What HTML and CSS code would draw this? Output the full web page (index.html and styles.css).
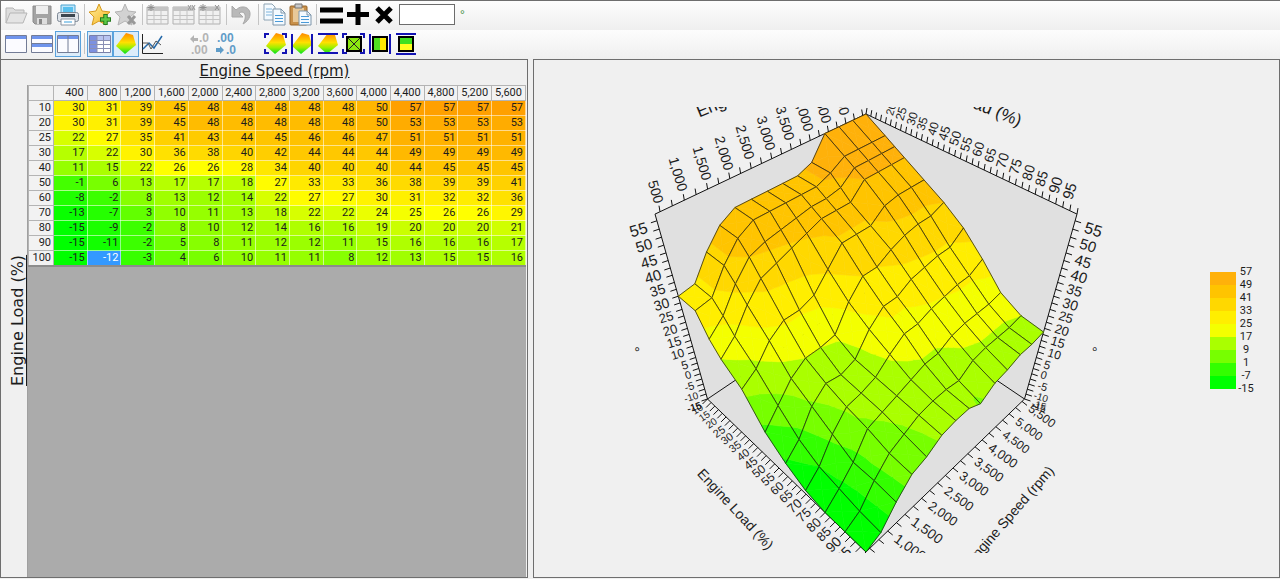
FILE: index.html
```
<!DOCTYPE html>
<html lang="en">
<head>
<meta charset="utf-8">
<title>Map editor</title>
<link rel="stylesheet" href="styles.css">
</head>
<body>
<svg class="defs" aria-hidden="true">
  <defs>
    <linearGradient id="heat" x1="0" y1="0" x2="0" y2="1">
      <stop offset="0" stop-color="#ff8a00"/><stop offset=".45" stop-color="#ffe000"/><stop offset=".7" stop-color="#9cf000"/><stop offset="1" stop-color="#00e020"/>
    </linearGradient>
    <linearGradient id="gold" x1="0" y1="0" x2="1" y2="1">
      <stop offset="0" stop-color="#fff0a0"/><stop offset="1" stop-color="#f5b21c"/>
    </linearGradient>
    <g id="table-grey">
      <path d="M1 4h21v17H1z" fill="#f0f0f0" stroke="#b0b0b0"/>
      <path d="M1 4h21v4H1z" fill="#c4c4c4"/>
      <path d="M1 12.500h21M1 16.500h21M8 8v13M15 8v13" stroke="#c4c4c4" fill="none"/>
    </g>
    <path id="patch" d="M12 1l7 2 3 10-11 9-9-8z" fill="url(#heat)"/>
    <path id="corners" d="M1 6V2h4M18 2h4v4M22 17v4h-4M5 21H1v-4" fill="none" stroke="#1414b4" stroke-width="2"/>
  </defs>
</svg>

<header class="toolbars">
  <div class="toolbar" role="toolbar" aria-label="File and edit">
    <button class="tool" aria-label="Open"><svg viewBox="0 0 24 24"><path d="M2 20V5h7l2 2h9v4" fill="#ddd" stroke="#b5b5b5"/><path d="M2 20l4-10h17l-4 10z" fill="#e4e4e4" stroke="#b5b5b5"/></svg></button>
    <button class="tool" aria-label="Save"><svg viewBox="0 0 24 24"><path d="M3 3h18v18H5l-2-2z" fill="#a3a3a3" stroke="#8c8c8c"/><path d="M6 3h12v8H6z" fill="#eee"/><path d="M7 15h10v6H7z" fill="#ddd"/><path d="M9 16h3v5H9z" fill="#888"/></svg></button>
    <button class="tool" aria-label="Print"><svg viewBox="0 0 24 24"><path d="M5 10V2h14v8" fill="#bfe6fa" stroke="#4aa3d0"/><path d="M7 4h10v6H7z" fill="#58c0ee"/><rect x="1.500" y="9.500" width="21" height="9" rx="2" fill="#dfe4ea" stroke="#7d8894"/><path d="M5 11h14v3H5z" fill="#3b4650"/><path d="M5 16h14v6H5z" fill="#fff" stroke="#8893a0"/><path d="M8 19h8" stroke="#3aa0dc"/></svg></button>
    <span class="sep"></span>
    <button class="tool" aria-label="Add favourite"><svg viewBox="0 0 24 24"><path d="M11 1l3 7 8 1-6 5 2 8-7-4-7 4 2-8-5-5 7-1z" fill="url(#gold)" stroke="#d79a1c"/><path d="M17.500 11v11M12 16.500h11" stroke="#237a1c" stroke-width="4.500"/><path d="M17.500 12v9M13 16.500h9" stroke="#5cc944" stroke-width="2.500"/></svg></button>
    <button class="tool" aria-label="Remove favourite"><svg viewBox="0 0 24 24"><path d="M11 1l3 7 8 1-6 5 2 8-7-4-7 4 2-8-5-5 7-1z" fill="#d2d2d2" stroke="#b4b4b4"/><path d="M14 13l7 8M21 13l-7 8" stroke="#999" stroke-width="3"/></svg></button>
    <span class="sep"></span>
    <button class="tool" aria-label="Insert cell"><svg viewBox="0 0 24 24"><use href="#table-grey"/><path d="M5 1v7M1.500 4.500h7M2.500 2l5 5M7.500 2l-5 5" stroke="#8f8f8f"/></svg></button>
    <button class="tool" aria-label="Insert row"><svg viewBox="0 0 24 24"><use href="#table-grey"/><path d="M16 2l3 5M19 2l-3 5M20 2l3 5M23 2l-3 5" stroke="#999"/></svg></button>
    <button class="tool" aria-label="Insert column"><svg viewBox="0 0 24 24"><use href="#table-grey"/><path d="M5 1v7M1.500 4.500h7M2.500 2l5 5M7.500 2l-5 5M17 2l4 5M21 2l-4 5" stroke="#8f8f8f"/></svg></button>
    <span class="sep"></span>
    <button class="tool" aria-label="Undo"><svg viewBox="0 0 24 24"><path d="M2 3v11h11L9 10c5-3 9 2 4 11 11-6 8-18-1-17-2 0-4 1-6 3z" fill="#b9b9b9" stroke="#a8a8a8"/></svg></button>
    <span class="sep"></span>
    <button class="tool" aria-label="Copy"><svg viewBox="0 0 24 24"><path d="M2 1h8l3 3v13H2z" fill="#f4faff" stroke="#8ea4b4"/><path d="M4 6h6M4 9h6M4 12h6" stroke="#7fb4dc"/><path d="M11 6h8l4 4v12H11z" fill="#f4faff" stroke="#7e96aa"/><path d="M19 6v4h4" fill="none" stroke="#7e96aa"/><path d="M13 12.500h8M13 15.500h8M13 18.500h8" stroke="#4a9ad8"/></svg></button>
    <button class="tool" aria-label="Paste"><svg viewBox="0 0 24 24"><rect x="2" y="3" width="17" height="19" rx="1" fill="#c8904a" stroke="#976428"/><path d="M5 5h11v14H5z" fill="#e8c898"/><path d="M7 1h7v4H7z" fill="#c9c9c9" stroke="#777"/><path d="M11 8h8l4 4v10H11z" fill="#f4faff" stroke="#7e96aa"/><path d="M19 8v4h4" fill="none" stroke="#7e96aa"/><path d="M13 13.500h8M13 16.500h8M13 19.500h8" stroke="#4a9ad8"/></svg></button>
    <span class="sep"></span>
    <button class="tool" aria-label="Set value"><svg viewBox="0 0 24 24"><path d="M0 7h23M0 18h23" stroke="#000" stroke-width="5"/></svg></button>
    <button class="tool" aria-label="Add value"><svg viewBox="0 0 24 24"><path d="M12 1v21M1 11.500h22" stroke="#000" stroke-width="5"/></svg></button>
    <button class="tool" aria-label="Multiply by value"><svg viewBox="0 0 24 24"><path d="M5 5l14 14M19 5L5 19" stroke="#000" stroke-width="5"/></svg></button>
    <input class="value" type="text" aria-label="Value">
    <span class="unit">°</span>
  </div>
  <div class="toolbar" role="toolbar" aria-label="View">
    <button class="tool" aria-label="Single pane"><svg viewBox="0 0 24 24"><path d="M1.500 3.500h21v17h-21z" fill="#fbfbff" stroke="#737c96"/><path d="M2 4h20v3H2z" fill="#6f94ec"/></svg></button>
    <button class="tool" aria-label="Stacked panes"><svg viewBox="0 0 24 24"><path d="M1.500 3.500h21v17h-21z" fill="#fbfbff" stroke="#737c96"/><path d="M2 4h20v3H2zM2 12h20v3H2z" fill="#6f94ec"/><path d="M1 11.500h22" stroke="#737c96"/></svg></button>
    <button class="tool on" aria-label="Side by side panes" aria-pressed="true"><svg viewBox="0 0 24 24"><path d="M1.500 3.500h21v17h-21z" fill="#fbfbff" stroke="#737c96"/><path d="M2 4h20v3H2z" fill="#6f94ec"/><path d="M12 4v16" stroke="#737c96"/></svg></button>
    <span class="sep"></span>
    <button class="tool on" aria-label="Table" aria-pressed="true"><svg viewBox="0 0 24 24"><path d="M1.500 3.500h21v17h-21z" fill="#fff" stroke="#7a80a8"/><path d="M2 4h7v16H2z" fill="#7c90e0"/><path d="M9 4h13v4H9z" fill="#b8c4f0"/><path d="M2 8.500h20M2 12.500h20M2 16.500h20M9 4v16M15.500 4v16" stroke="#8a8fb4"/></svg></button>
    <button class="tool on" aria-label="3D surface" aria-pressed="true"><svg viewBox="0 0 24 24"><use href="#patch"/></svg></button>
    <button class="tool" aria-label="Line graph"><svg viewBox="0 0 24 24"><path d="M2.500 2v19.500H23" fill="none" stroke="#222"/><path d="M3 17l6-6 5 5 8-12" fill="none" stroke="#2468a8" stroke-width="1.500"/><path d="M3 11h5l3 6 5-8 5 4" fill="none" stroke="#555"/></svg></button>
    <span class="gap"></span>
    <button class="tool" aria-label="Fewer decimals"><svg viewBox="0 0 24 24" class="digits grey"><text x="10" y="10">.0</text><text x="2" y="22">.00</text><path d="M1 7l4-4v3h4v3H5v2z"/></svg></button>
    <button class="tool" aria-label="More decimals"><svg viewBox="0 0 24 24" class="digits blue"><text x="2" y="10">.00</text><text x="11" y="22">.0</text><path d="M9 18l-4-4v2H1v4h4v2z"/></svg></button>
    <span class="gap"></span>
    <button class="tool" aria-label="Fit surface"><svg viewBox="0 0 24 24"><use href="#patch"/><use href="#corners"/></svg></button>
    <button class="tool" aria-label="Fit surface width"><svg viewBox="0 0 24 24"><use href="#patch"/><path d="M2 2v20M22 2v20" stroke="#1414b4" stroke-width="2"/></svg></button>
    <button class="tool" aria-label="Fit surface height"><svg viewBox="0 0 24 24"><use href="#patch"/><path d="M2 2h20M2 21h20" stroke="#1414b4" stroke-width="2"/></svg></button>
    <button class="tool" aria-label="Fit view"><svg viewBox="0 0 24 24"><use href="#corners"/><path d="M5 5h14v14H5z" fill="#8be810" stroke="#000" stroke-width="2"/><path d="M6 6l12 12M18 6L6 18" stroke="#222"/></svg></button>
    <button class="tool" aria-label="Fit view width"><svg viewBox="0 0 24 24"><path d="M2 2v20M22 2v20" stroke="#1414b4" stroke-width="2"/><path d="M5 5h14v14H5z" fill="#ffea00"/><path d="M5 5h7v14H5z" fill="#50e020"/><path d="M5 5h14v14H5z" fill="none" stroke="#000" stroke-width="2"/></svg></button>
    <button class="tool" aria-label="Fit view height"><svg viewBox="0 0 24 24"><path d="M2 2h20M2 22h20" stroke="#1414b4" stroke-width="2"/><path d="M5 5h14v14H5z" fill="#ffff20"/><path d="M5 5h14v7H5z" fill="#40e020"/><path d="M5 5h14v14H5z" fill="none" stroke="#000" stroke-width="2"/></svg></button>
  </div>
</header>

<main class="panes">
  <section class="pane table-pane">
    <h1 class="x-title">Engine Speed (rpm)</h1>
    <div class="y-title">Engine Load (%)</div>
    <div class="sheet">
      <table class="map" id="map" aria-label="Engine load by engine speed"></table>
    </div>
  </section>
  <section class="pane chart-pane">
    <svg class="plot" viewBox="556 107 624 446" role="img" aria-label="3D surface of the map">
      <g id="walls"></g>
      <g id="surface"></g>
      <g id="ticks"></g>
      <g id="labels"></g>
    </svg>
    <div class="legend">
      <div class="ramp" id="ramp"></div>
      <ol class="scale" id="scale"></ol>
    </div>
  </section>
</main>
<script src="app.js"></script>
</body>
</html>
```
FILE: styles.css
```
* { box-sizing: border-box; }
html, body { height: 100%; }
body {
  margin: 0;
  display: flex;
  flex-direction: column;
  background: #f0f0f0;
  color: #1c1c1c;
  font-family: "Liberation Sans", Arial, sans-serif;
}
.defs { position: absolute; width: 0; height: 0; }

.toolbars {
  border: 1px solid #6e6e6e;
  border-width: 1px 0 0 1px;
}
.toolbar {
  display: flex;
  align-items: center;
  height: 29px;
  padding: 0 0 2px 2px;
  background: linear-gradient(#fdfdfd, #efefef);
}
.tool {
  width: 26px;
  height: 26px;
  padding: 0;
  border: 1px solid transparent;
  background: none;
  flex: none;
}
.tool svg { display: block; width: 24px; height: 24px; }
.tool.on { border-color: #5aa2dc; background: #dcecfa; }
.sep { width: 1px; height: 21px; margin: 0 2px 0 3px; background: #c4c4c4; }
.gap { width: 23px; }
.digits { font: bold 12px "Liberation Sans", Arial, sans-serif; }
.grey { fill: #b4b4b4; }
.blue { fill: #5f9cc8; }
.value {
  width: 56px;
  height: 21px;
  margin-left: 2px;
  border: 1px solid #6c6c6c;
  background: #fff;
}
.unit { margin-left: 5px; font-size: 12px; color: #3c8c3c; }

.panes {
  flex: 1;
  min-height: 0;
  display: grid;
  grid-template-columns: 528fr 747fr;
  gap: 5px;
  padding-bottom: 1px;
}
.pane { border: 1px solid #6e6e6e; min-width: 0; }

.table-pane {
  display: grid;
  grid-template-columns: 26px minmax(0, 1fr);
  grid-template-rows: 25px minmax(0, 1fr);
  padding-right: 1px;
}
.x-title, .y-title {
  margin: 0;
  font: 15px "DejaVu Sans", Verdana, sans-serif;
  text-decoration: underline;
  text-align: center;
  white-space: nowrap;
}
.x-title { grid-column: 1 / 3; padding-left: 22px; line-height: 23px; }
.y-title {
  justify-self: end;
  padding-top: 22px;
  font-size: 16px;
  line-height: 18px;
  writing-mode: vertical-rl;
  transform: rotate(180deg);
}
.sheet { background: #ababab; border-left: 1px solid #a0a0a0; }

.map {
  width: 100%;
  table-layout: fixed;
  border-collapse: collapse;
  border-bottom: 2px solid #8c8c8c;
  font: 11px/14px "Liberation Sans Narrow", "Roboto", sans-serif;
}
.map th, .map td { height: 15px; padding: 0 2px 0 0; text-align: right; }
.map th { font-weight: normal; background: #f2f2f2; border: 1px solid #b4b4b4; }
.map thead th { padding-right: 3px; }
.map th:first-child { width: 25px; }
.map td { border: 1px solid rgba(255, 255, 255, .55); }
.map td.selected { color: #fff; }

.chart-pane {
  display: grid;
  grid-template-columns: minmax(0, 1fr) auto;
  column-gap: 30px;
  align-items: center;
  padding: 24px 25px 2px 22px;
}
.plot { display: block; width: 100%; max-height: 100%; font-family: "Liberation Sans", Arial, sans-serif; fill: #1c1c1c; }
.wall { fill: #e0e0e0; }
.edge, .mesh { fill: none; stroke: #111; stroke-width: 1; }
.mesh { stroke-opacity: .7; }
.legend { display: flex; align-items: flex-start; gap: 2px; }
.ramp { width: 26px; margin-top: 7px; }
.band { height: 13px; }
.scale { list-style: none; margin: 0; padding: 0; width: 16px; font: 11px/13px "Liberation Sans Narrow", "Roboto", sans-serif; text-align: center; }
```
FILE: app.js
```
const rpm = [400, 800, 1200, 1600, 2000, 2400, 2800, 3200, 3600, 4000, 4400, 4800, 5200, 5600];
const load = [10, 20, 25, 30, 40, 50, 60, 70, 80, 90, 100];
const map = [
  [30, 31, 39, 45, 48, 48, 48, 48, 48, 50, 57, 57, 57, 57],
  [30, 31, 39, 45, 48, 48, 48, 48, 48, 50, 53, 53, 53, 53],
  [22, 27, 35, 41, 43, 44, 45, 46, 46, 47, 51, 51, 51, 51],
  [17, 22, 30, 36, 38, 40, 42, 44, 44, 44, 49, 49, 49, 49],
  [11, 15, 22, 26, 26, 28, 34, 40, 40, 40, 44, 45, 45, 45],
  [-1, 6, 13, 17, 17, 18, 27, 33, 33, 36, 38, 39, 39, 41],
  [-8, -2, 8, 13, 12, 14, 22, 27, 27, 30, 31, 32, 32, 36],
  [-13, -7, 3, 10, 11, 13, 18, 22, 22, 24, 25, 26, 26, 29],
  [-15, -9, -2, 8, 10, 12, 14, 16, 16, 19, 20, 20, 20, 21],
  [-15, -11, -2, 5, 8, 11, 12, 12, 11, 15, 16, 16, 16, 17],
  [-15, -12, -3, 4, 6, 10, 11, 11, 8, 12, 13, 15, 15, 16]
];
const bands = ["#00ff00", "#33ff00", "#77ff00", "#aaff00", "#f4ff00", "#ffee00", "#ffd800", "#ffc400", "#ffb10a"];
const zMin = -15, zMax = 57, zStep = 8;

/* Table */
const stops = [[-15, 0, 255], [-2, 60, 255], [8, 135, 255], [16, 175, 255], [22, 215, 255], [26, 255, 255], [36, 255, 225], [44, 255, 200], [57, 255, 160]];
function cellColor(z) {
  const i = Math.max(1, stops.findIndex(s => s[0] >= z));
  const a = stops[i - 1], b = stops[i], t = (z - a[0]) / (b[0] - a[0]);
  const mix = k => Math.round(a[k] + (b[k] - a[k]) * t);
  return `rgb(${mix(1)}, ${mix(2)}, 0)`;
}
const head = "<thead><tr><th></th>" + rpm.map(r => `<th scope="col">${r.toLocaleString("en-US")}</th>`).join("") + "</tr></thead>";
const body = map.map((row, j) => `<tr><th scope="row">${load[j]}</th>` + row.map((z, i) => {
  const selected = j === 10 && i === 1;
  return `<td${selected ? ' class="selected"' : ""} style="background:${selected ? "#3399ff" : cellColor(z)}">${z}</td>`;
}).join("") + "</tr>").join("");
document.getElementById("map").innerHTML = head + "<tbody>" + body + "</tbody>";

/* Legend */
document.getElementById("ramp").innerHTML = [...bands].reverse().map(c => `<div class="band" style="background:${c}"></div>`).join("");
document.getElementById("scale").innerHTML = bands.concat("").map((c, i) => `<li>${zMax - i * zStep}</li>`).join("");

/* Perspective projection of (rpm, load, value) */
function project(r, l, z) {
  const u = (r - 400) / 5200, v = (l - 10) / 90, w = (z - zMin) / (zMax - zMin);
  const s = u + v - 1, d = u - v;
  const W = 1 + 0.1776 * d - 0.2488 * w;
  return [866 + 158.5 * s / W, (399 - 54.95 * d - 238.2 * w) / W];
}
const points = list => list.map(p => project(...p).map(n => n.toFixed(1)).join(",")).join(" ");
const wall = list => `<polygon class="wall" points="${points(list)}"/>`;
const edge = list => `<polyline class="edge" points="${points(list)}"/>`;

document.getElementById("walls").innerHTML =
  wall([[400, 10, zMax], [5600, 10, zMax], [5600, 10, zMin], [400, 10, zMin]]) +
  wall([[5600, 10, zMax], [5600, 100, zMax], [5600, 100, zMin], [5600, 10, zMin]]) +
  wall([[400, 10, zMin], [5600, 10, zMin], [5600, 100, zMin], [400, 100, zMin]]) +
  edge([[400, 10, zMin], [5600, 10, zMin], [5600, 100, zMin]]) +
  edge([[400, 10, zMin], [400, 10, zMax], [5600, 10, zMax], [5600, 100, zMax], [5600, 100, zMin], [400, 100, zMin], [400, 10, zMin]]);

/* Keep the part of a polygon at or above (sign 1) or below (sign -1) a level */
function clip(poly, level, sign) {
  const out = [];
  poly.forEach((a, i) => {
    const b = poly[(i + 1) % poly.length];
    const da = sign * (a[2] - level), db = sign * (b[2] - level);
    if (da >= 0) out.push(a);
    if ((da >= 0) !== (db >= 0)) {
      const t = da / (da - db);
      out.push(a.map((n, k) => n + (b[k] - n) * t));
    }
  });
  return out;
}
function fill(poly) {
  return bands.map((color, k) => {
    let p = poly;
    if (k > 0) p = clip(p, zMin + k * zStep, 1);
    if (k < bands.length - 1) p = clip(p, zMin + (k + 1) * zStep, -1);
    return p.length > 2 ? `<polygon points="${points(p)}" fill="${color}" stroke="${color}" stroke-width=".6"/>` : "";
  }).join("");
}
const cells = [];
for (let j = 0; j < load.length - 1; j++)
  for (let i = 0; i < rpm.length - 1; i++) cells.push([i, j]);
const depth = ([i, j]) => (rpm[i] + rpm[i + 1]) / 10400 - (load[j] + load[j + 1]) / 180;
cells.sort((a, b) => depth(b) - depth(a));
document.getElementById("surface").innerHTML = cells.map(([i, j]) => {
  const q = [[rpm[i], load[j], map[j][i]], [rpm[i + 1], load[j], map[j][i + 1]], [rpm[i + 1], load[j + 1], map[j + 1][i + 1]], [rpm[i], load[j + 1], map[j + 1][i]]];
  const mid = [0, 1, 2].map(k => (q[0][k] + q[1][k] + q[2][k] + q[3][k]) / 4);
  return q.map((p, k) => fill([p, q[(k + 1) % 4], mid])).join("") + `<polygon class="mesh" points="${points(q)}"/>`;
}).join("");

/* Axis ticks and labels */
const ticks = [], labels = [];
function tick(p, dx, dy) {
  const [x, y] = project(...p);
  ticks.push(`<path class="edge" d="M${x.toFixed(1)} ${y.toFixed(1)}l${dx} ${dy}"/>`);
}
function text(x, y, angle, size, anchor, value) {
  labels.push(`<text transform="translate(${x.toFixed(0)} ${y.toFixed(0)}) rotate(${Math.round(angle)})" font-size="${Math.round(size)}" text-anchor="${anchor}" dy=".35em">${value}</text>`);
}
for (let z = -15; z <= 57; z += 2.5) {
  tick([400, 10, z], -6, 2);
  tick([5600, 100, z], 6, 2);
  if (z % 5 === 0) {
    const w = (z - zMin) / 72, size = 10 + 6 * w;
    const [lx, ly] = project(400, 10, z), [rx, ry] = project(5600, 100, z);
    text(lx - 7 - 3 * w, ly + 6, -17, size, "end", z);
    text(rx + 7 + 3 * w, ry + 6, 17, size, "start", z);
  }
}
for (let r = 500; r <= 5500; r += 250) {
  tick([r, 10, zMax], -1, -6);
  tick([r, 100, zMin], 5, 4);
  if (r % 500 === 0) {
    const [tx, ty] = project(r, 10, zMax), [bx, by] = project(r, 100, zMin);
    text(tx - 1, ty - 9, 74, 14, "end", r.toLocaleString("en-US"));
    if (r > 500) text(bx + 8, by + 6, 36, 14 - 2 * (r - 500) / 5000, "start", r.toLocaleString("en-US"));
  }
}
for (let l = 10; l <= 100; l += 2.5) {
  tick([5600, l, zMax], 1, -6);
  tick([400, l, zMin], -5, 5);
  if (l % 5 === 0 && l < 100) {
    const v = (l - 10) / 90;
    const [tx, ty] = project(5600, l, zMax), [bx, by] = project(400, l, zMin);
    if (l >= 20) text(tx + 4, ty - 8, -72, 11 + 4 * v, "start", l);
    text(bx - 6, by + 7, -33 - 12 * v, 10 + 4 * v, "end", l);
  }
}
text(697, 112, -22, 17, "start", "Engine Speed (rpm)");
text(1021, 121, 22, 17, "end", "Engine Load (%)");
text(700, 471, 47, 14, "start", "Engine Load (%)");
text(1051, 468, -49, 14, "end", "Engine Speed (rpm)");
text(638, 352, -15, 14, "middle", "°");
text(1094, 352, 15, 14, "middle", "°");
{
  const [lx, ly] = project(400, 10, zMin), [rx, ry] = project(5600, 100, zMin);
  text(lx - 7, ly + 6, -17, 10, "end", zMin);
  text(rx + 7, ry + 4, 17, 10, "start", zMin);
}
document.getElementById("ticks").innerHTML = ticks.join("");
document.getElementById("labels").innerHTML = labels.join("");
```
